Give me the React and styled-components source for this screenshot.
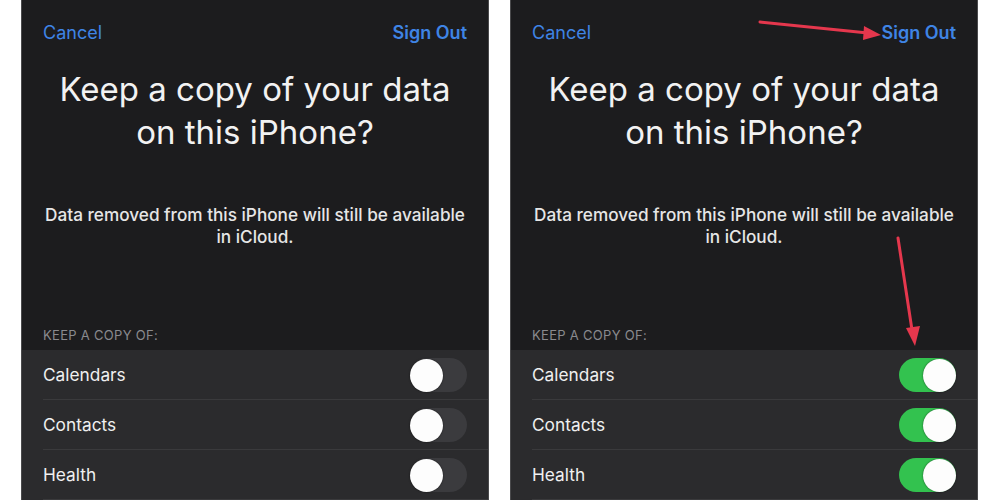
import React from "react";
import styled, { createGlobalStyle } from "styled-components";

const Global = createGlobalStyle`
  html, body { margin: 0; padding: 0; background: #ffffff; overflow: hidden; }
  body { width: 1000px; height: 500px; font-family: "Inter", "Liberation Sans", sans-serif; }
`;

const Page = styled.div`
  position: relative;
  width: 1000px;
  height: 500px;
  display: flex;
  gap: 21px;
  padding-left: 21px;
  box-sizing: border-box;
  background: #ffffff;
  overflow: hidden;
`;

const Panel = styled.div`
  width: 468px;
  height: 500px;
  flex: none;
  box-sizing: border-box;
  background: #1c1c1e;
  border-left: 1px solid #4a4a4c;
  border-right: 1px solid #4a4a4c;
  display: flex;
  flex-direction: column;
  overflow: hidden;
`;

const NavBar = styled.div`
  display: flex;
  justify-content: space-between;
  padding: 22px 21px 0 21px;
  height: 22px;
`;

const NavButton = styled.span`
  font-size: 18px;
  line-height: 22px;
  color: #3f84e5;
  font-weight: ${(p) => (p.$strong ? 600 : 400)};
`;

const Title = styled.h1`
  margin: 24px 0 0 0;
  font-size: 33px;
  line-height: 43px;
  font-weight: 400;
  color: #f2f2f2;
  text-align: center;
`;

const Subtitle = styled.p`
  margin: 50px 0 0 0;
  font-size: 17.2px;
  line-height: 22px;
  font-weight: 500;
  color: #e6e6e6;
  text-align: center;
  padding: 0 6px;
`;

const SectionHeader = styled.div`
  margin-top: 79px;
  padding: 0 21px 7px 21px;
  font-size: 13px;
  line-height: 16px;
  color: #8a8a8e;
  text-transform: uppercase;
  letter-spacing: 0.3px;
`;

const List = styled.div`
  background: #2b2b2d;
  display: flex;
  flex-direction: column;
`;

const Row = styled.div`
  height: 50px;
  margin-left: 21px;
  padding-right: 21px;
  display: flex;
  align-items: center;
  justify-content: space-between;
  box-sizing: border-box;
  border-bottom: 1px solid #3a3a3c;
`;

const RowLabel = styled.span`
  font-size: 17.3px;
  color: #f0f0f0;
`;

const Track = styled.div`
  width: 57px;
  height: 34px;
  border-radius: 17px;
  background: ${(p) => (p.$on ? "#33c24f" : "#3b3b3e")};
  position: relative;
  flex: none;
`;

const Knob = styled.div`
  position: absolute;
  top: 1px;
  left: ${(p) => (p.$on ? "24px" : "0px")};
  width: 33px;
  height: 33px;
  border-radius: 50%;
  background: #fdfdfd;
  box-shadow: 0 0 2px rgba(0, 0, 0, 0.6);
`;

const Overlay = styled.svg`
  position: absolute;
  left: 0;
  top: 0;
  width: 1000px;
  height: 500px;
  pointer-events: none;
`;

const items = ["Calendars", "Contacts", "Health"];

function Screen({ on }) {
  return (
    <Panel>
      <NavBar>
        <NavButton>Cancel</NavButton>
        <NavButton $strong>Sign Out</NavButton>
      </NavBar>
      <Title>
        Keep a copy of your data
        <br />
        on this iPhone?
      </Title>
      <Subtitle>
        Data removed from this iPhone will still be available
        <br />
        in iCloud.
      </Subtitle>
      <SectionHeader>Keep a copy of:</SectionHeader>
      <List>
        {items.map((it) => (
          <Row key={it}>
            <RowLabel>{it}</RowLabel>
            <Track $on={on}>
              <Knob $on={on} />
            </Track>
          </Row>
        ))}
      </List>
    </Panel>
  );
}

export default function App() {
  return (
    <Page>
      <Global />
      <Screen on={false} />
      <Screen on={true} />
      <Overlay viewBox="0 0 1000 500">
        <line x1="760" y1="22" x2="868" y2="33" stroke="#e5374d" strokeWidth="3" strokeLinecap="round" />
        <polygon points="881,35 864,26 863,40" fill="#e5374d" />
        <line x1="898" y1="238" x2="912" y2="330" stroke="#e5374d" strokeWidth="3" strokeLinecap="round" />
        <polygon points="915,346 906,328 920,326" fill="#e5374d" />
      </Overlay>
    </Page>
  );
}
